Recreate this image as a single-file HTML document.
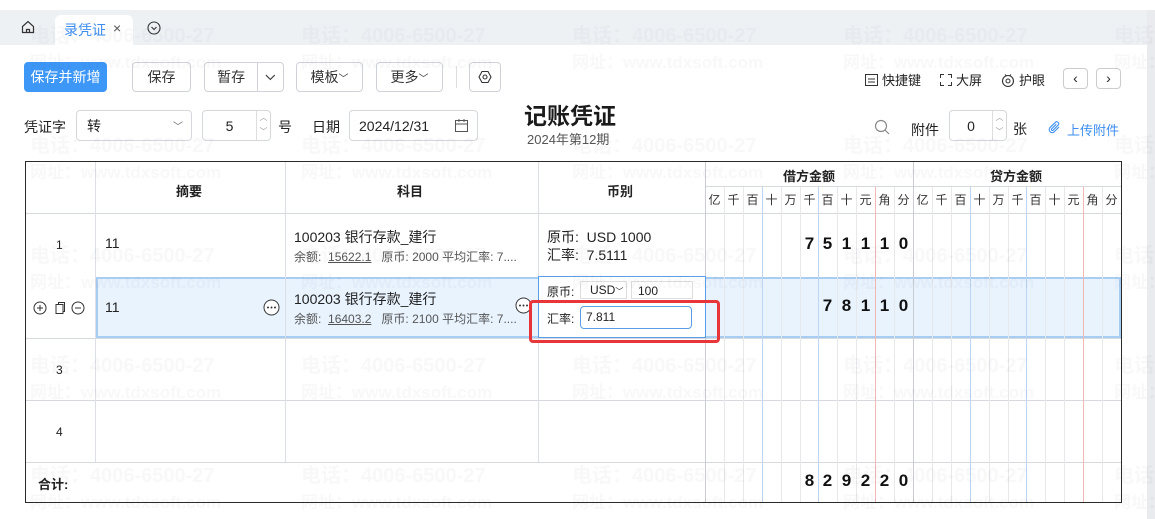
<!DOCTYPE html>
<html><head><meta charset="utf-8">
<style>
*{box-sizing:border-box;margin:0;padding:0}
body{width:1155px;height:519px;overflow:hidden;background:#fff;font-family:"Liberation Sans","Noto Sans CJK SC",sans-serif;color:#222;font-size:13px;position:relative}
.a{position:absolute}
.btn{position:absolute;border:1px solid #cfd3d9;border-radius:4px;background:#fff;height:30px;top:62px;display:flex;align-items:center;justify-content:center;font-size:14px;color:#333}
.inp{position:absolute;border:1px solid #d4d7dc;border-radius:4px;background:#fff;height:31px;top:110px;font-size:14px;display:flex;align-items:center}
.wm{position:absolute;color:rgba(60,70,80,0.035);font-weight:bold;white-space:nowrap;pointer-events:none;z-index:50}
.t1{font-size:20px}.t2{font-size:17px}
.vl{position:absolute;width:1px;background:#dcdfe6}
.hl{position:absolute;height:1px;background:#d6d9de}
.dg{position:absolute;font-weight:bold;font-size:17px;width:19px;text-align:center;color:#111}
.hd{position:absolute;font-size:12px;width:19px;text-align:center;top:191px;color:#333}
</style></head><body>
<div class="a" style="left:0;top:10px;width:1147px;height:35px;background:#eef1f4"></div>
<div class="a" style="left:1147px;top:10px;width:8px;height:509px;background:#e9ebee"></div>
<svg class="a" style="left:21px;top:20px" width="14" height="14" viewBox="0 0 14 14"><path d="M1.5 6.5L7 1.5l5.5 5v6h-11z" fill="none" stroke="#333" stroke-width="1.2"/><path d="M5.5 12.5v-3h3v3" fill="none" stroke="#333" stroke-width="1.2"/></svg>
<div class="a" style="left:55px;top:15px;width:78px;height:30px;background:#fff;border-radius:6px 6px 0 0"></div>
<div class="a" style="left:64px;top:20px;font-size:14px;color:#3d8ef0">录凭证</div>
<div class="a" style="left:113px;top:20px;font-size:14px;color:#555">×</div>
<svg class="a" style="left:147px;top:21px" width="14" height="14" viewBox="0 0 14 14"><circle cx="7" cy="7" r="6" fill="none" stroke="#333" stroke-width="1.1"/><path d="M4.5 6l2.5 2.5L9.5 6" fill="none" stroke="#333" stroke-width="1.1"/></svg>

<div class="btn" style="left:24px;width:83px;background:#3d97f7;border-color:#3d97f7;color:#fff">保存并新增</div>
<div class="btn" style="left:132px;width:59px">保存</div>
<div class="btn" style="left:204px;width:80px;justify-content:flex-start"><span style="width:54px;text-align:center;border-right:1px solid #cfd3d9;line-height:28px">暂存</span><svg width="25" height="12" viewBox="0 0 25 12"><path d="M8 4l4.5 4.5L17 4" fill="none" stroke="#444" stroke-width="1.2"/></svg></div>
<div class="btn" style="left:296px;width:67px">模板<span style="font-size:10px">﹀</span></div>
<div class="btn" style="left:376px;width:67px">更多<span style="font-size:10px">﹀</span></div>
<div class="a" style="left:456px;top:66px;width:1px;height:22px;background:#ddd"></div>
<div class="btn" style="left:469px;width:32px"><svg width="14" height="14" viewBox="0 0 14 14"><path d="M4 1.5h6L13 7l-3 5.5H4L1 7z" fill="none" stroke="#333" stroke-width="1.1"/><circle cx="7" cy="7" r="2" fill="none" stroke="#333" stroke-width="1.1"/></svg></div>

<div class="a" style="left:865px;top:70px;font-size:13px;display:flex;align-items:center;gap:4px"><svg width="13" height="12"><rect x="0.5" y="0.5" width="12" height="11" fill="none" stroke="#333"/><path d="M3 5h7M3 8h7" stroke="#333"/></svg>快捷键</div>
<div class="a" style="left:940px;top:70px;font-size:13px;display:flex;align-items:center;gap:4px"><svg width="12" height="12"><path d="M.5 4V.5H4M8 .5h3.5V4M11.5 8v3.5H8M4 11.5H.5V8" fill="none" stroke="#333"/></svg>大屏</div>
<div class="a" style="left:1001px;top:70px;font-size:13px;display:flex;align-items:center;gap:4px"><svg width="14" height="14"><circle cx="7" cy="8" r="5.5" fill="none" stroke="#333" stroke-width="1.1"/><circle cx="7" cy="8" r="2" fill="none" stroke="#333"/><path d="M4 1.5l1.5 1.5M10 1.5L8.5 3" stroke="#333"/></svg>护眼</div>
<div class="a" style="left:1063px;top:68px;width:25px;height:21px;border:1px solid #ccc;border-radius:4px;text-align:center;line-height:19px;font-size:14px">&#8249;</div>
<div class="a" style="left:1096px;top:68px;width:25px;height:21px;border:1px solid #ccc;border-radius:4px;text-align:center;line-height:19px;font-size:14px">&#8250;</div>

<div class="a" style="left:24px;top:117px;font-size:14px">凭证字</div>
<div class="inp" style="left:76px;width:116px;padding-left:10px">转<span style="position:absolute;right:8px;font-size:10px;color:#666">﹀</span></div>
<div class="inp" style="left:202px;width:69px;justify-content:center;padding-right:14px">5<span style="position:absolute;right:0;top:0;width:14px;height:29px;border-left:1px solid #ddd;font-size:8px;color:#999;text-align:center;line-height:14px">︿<br>﹀</span></div>
<div class="a" style="left:278px;top:117px;font-size:14px">号</div>
<div class="a" style="left:312px;top:117px;font-size:14px">日期</div>
<div class="inp" style="left:349px;width:129px;padding-left:9px">2024/12/31<svg style="position:absolute;right:9px" width="13" height="13"><rect x=".5" y="1.5" width="12" height="11" fill="none" stroke="#555"/><path d="M.5 5h12M4 0v3M9 0v3" stroke="#555"/></svg></div>
<div class="a" style="left:524px;top:97px;font-size:23px;font-weight:bold;color:#1a1a1a">记账凭证</div>
<div class="a" style="left:527px;top:129px;font-size:13px;color:#555">2024年第12期</div>
<svg class="a" style="left:874px;top:119px" width="16" height="16"><circle cx="7" cy="7" r="5.5" fill="none" stroke="#888" stroke-width="1.2"/><path d="M11 11l4 4" stroke="#888" stroke-width="1.2"/></svg>
<div class="a" style="left:911px;top:120px;font-size:14px">附件</div>
<div class="inp" style="left:949px;width:58px;justify-content:center;padding-right:14px">0<span style="position:absolute;right:0;top:0;width:14px;height:29px;border-left:1px solid #ddd;font-size:8px;color:#999;text-align:center;line-height:14px">︿<br>﹀</span></div>
<div class="a" style="left:1013px;top:119px;font-size:14px">张</div>
<svg class="a" style="left:1048px;top:121px" width="13" height="14" viewBox="0 0 13 14"><path d="M11 6L6 11a3 3 0 01-4.2-4.2L7.5 1.2a2 2 0 012.8 2.8L5 9.3a1 1 0 01-1.4-1.4L8.3 3.2" fill="none" stroke="#3d8ef0" stroke-width="1.1"/></svg>
<div class="a" style="left:1067px;top:120px;font-size:13px;color:#3d8ef0">上传附件</div>

<div class="a" style="left:25px;top:161px;width:1097px;height:342px;border:1px solid #2a2a2a"></div>
<div class="a" style="left:96px;top:277px;width:1025px;height:61px;background:#e8f3fe;border:2px solid #a8cdf2"></div>
<div class="hl" style="left:26px;top:213px;width:1095px"></div>
<div class="hl" style="left:26px;top:338px;width:1095px"></div>
<div class="hl" style="left:26px;top:400px;width:1095px"></div>
<div class="hl" style="left:26px;top:462px;width:1095px"></div>
<div class="hl" style="left:705px;top:186px;width:416px"></div>
<div class="vl" style="left:95px;top:162px;height:300px"></div>
<div class="vl" style="left:285px;top:162px;height:300px"></div>
<div class="vl" style="left:538px;top:162px;height:300px"></div>
<div class="vl" style="left:705px;top:162px;height:340px;background:#c9ccd2"></div>
<div class="vl" style="left:913px;top:162px;height:340px;background:#c9ccd2"></div>
<div id="cols"></div>
<div class="a" style="left:176px;top:181px;font-weight:bold;font-size:13px">摘要</div>
<div class="a" style="left:397px;top:181px;font-weight:bold;font-size:13px">科目</div>
<div class="a" style="left:607px;top:181px;font-weight:bold;font-size:13px">币别</div>
<div class="a" style="left:783px;top:166px;font-weight:bold;font-size:13px">借方金额</div>
<div class="a" style="left:990px;top:166px;font-weight:bold;font-size:13px">贷方金额</div>

<div class="a" style="left:56px;top:238px;font-size:12px">1</div>
<div class="a" style="left:105px;top:235px;font-size:14px">11</div>
<div class="a" style="left:294px;top:227px;font-size:14px">100203 银行存款_建行</div>
<div class="a" style="left:294px;top:248px;font-size:12px;color:#555">余额: &nbsp;<u>15622.1</u> &nbsp; 原币: 2000 平均汇率: 7....</div>
<div class="a" style="left:547px;top:227px;font-size:14px">原币: &nbsp;USD 1000</div>
<div class="a" style="left:547px;top:245px;font-size:14px">汇率: &nbsp;7.5111</div>

<svg class="a" style="left:32px;top:300px" width="60" height="16"><circle cx="8" cy="8" r="6" fill="none" stroke="#333"/><path d="M5 8h6M8 5v6" stroke="#333"/><rect x="24" y="4.5" width="7" height="9" fill="none" stroke="#333"/><path d="M26.5 4.5V2.5h6v9h-1.5" fill="none" stroke="#333"/><circle cx="46" cy="8" r="6" fill="none" stroke="#333"/><path d="M43 8h6" stroke="#333"/></svg>
<div class="a" style="left:105px;top:299px;font-size:14px">11</div>
<svg class="a" style="left:263px;top:299px" width="17" height="17"><circle cx="8.5" cy="8.5" r="7.5" fill="#fff" stroke="#333"/><circle cx="5" cy="8.5" r="1" fill="#333"/><circle cx="8.5" cy="8.5" r="1" fill="#333"/><circle cx="12" cy="8.5" r="1" fill="#333"/></svg>
<svg class="a" style="left:515px;top:297px" width="17" height="17"><circle cx="8.5" cy="8.5" r="7.5" fill="#fff" stroke="#333"/><circle cx="5" cy="8.5" r="1" fill="#333"/><circle cx="8.5" cy="8.5" r="1" fill="#333"/><circle cx="12" cy="8.5" r="1" fill="#333"/></svg>
<div class="a" style="left:294px;top:289px;font-size:14px">100203 银行存款_建行</div>
<div class="a" style="left:294px;top:310px;font-size:12px;color:#555">余额: &nbsp;<u>16403.2</u> &nbsp; 原币: 2100 平均汇率: 7....</div>

<div class="a" style="left:538px;top:276px;width:168px;height:62px;background:#fff;border:1px solid #5b9ee6"></div>
<div class="a" style="left:547px;top:283px;font-size:12px">原币:</div>
<div class="a" style="left:580px;top:281px;width:47px;height:18px;border:1px solid #ddd;font-size:12px;padding-left:9px;line-height:16px">USD<span style="font-size:8px">﹀</span></div>
<div class="a" style="left:631px;top:281px;width:62px;height:18px;border:1px solid #ddd;font-size:12px;padding-left:6px;line-height:18px">100</div>
<div class="a" style="left:547px;top:310px;font-size:12px">汇率:</div>
<div class="a" style="left:580px;top:306px;width:112px;height:23px;border:1px solid #5b9ee6;border-radius:4px;font-size:12px;padding-left:5px;line-height:21px">7.811</div>
<div class="a" style="left:529px;top:300px;width:191px;height:43px;border:3px solid #e8353a;border-radius:4px;z-index:5"></div>

<div class="a" style="left:56px;top:363px;font-size:12px">3</div>
<div class="a" style="left:56px;top:425px;font-size:12px">4</div>
<div class="a" style="left:38px;top:474px;font-size:13px;font-weight:bold">合计:</div>
<div id="digs"></div>

<div id="wms"></div>
<script>
var c='',h='';
var L=['亿','千','百','十','万','千','百','十','元','角','分'];
for(var s=0;s<2;s++){var x0=s?913:705;for(var i=0;i<11;i++){var x=x0+i*18.9;
 if(i>0){var col='#e6e8eb';if(i==3||i==6)col='#bcd5f2';if(i==9)col='#f2b8b8';
 c+='<div class="vl" style="left:'+Math.round(x)+'px;top:187px;height:315px;background:'+col+'"></div>';}
 h+='<div class="hd" style="left:'+Math.round(x)+'px">'+L[i]+'</div>';}}
document.getElementById('cols').innerHTML=c+h;
var d='';function put(str,y){for(var i=0;i<str.length;i++){var idx=11-str.length+i;d+='<div class="dg" style="left:'+Math.round(705+idx*18.9)+'px;top:'+y+'px">'+str[i]+'</div>';}}
put('751110',234);put('78110',296);put('829220',471);
document.getElementById('digs').innerHTML=d;
var w='';for(var r=0;r<5;r++){for(var k=0;k<5;k++){var x=30+k*271,y=19+r*110;
w+='<div class="wm t1" style="left:'+x+'px;top:'+y+'px">电话：4006-6500-27</div><div class="wm t2" style="left:'+x+'px;top:'+(y+29)+'px">网址：www.tdxsoft.com</div>';}}
document.getElementById('wms').innerHTML=w;
</script>
</body></html>
